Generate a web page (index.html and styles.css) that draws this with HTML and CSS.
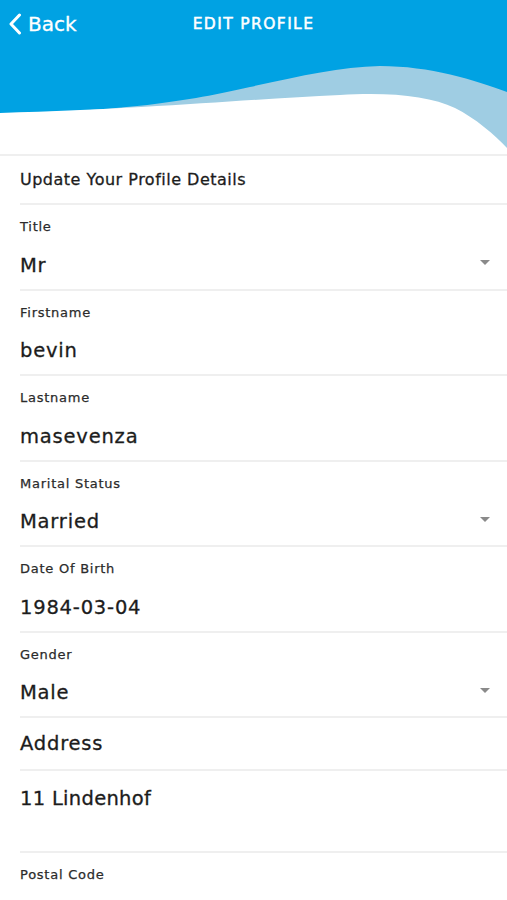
FILE: index.html
```html
<!DOCTYPE html>
<html lang="en">
<head>
  <meta charset="UTF-8" />
  <meta name="viewport" content="width=device-width, initial-scale=1" />
  <title>Edit Profile</title>
  <link rel="stylesheet" href="styles.css">
</head>
<body>
  <header class="top">
    <div class="top-bar">
      <a href="#" class="back">
        <svg class="back-icon" viewBox="0 0 14 22" width="14" height="22">
          <path d="M11.5 2 L3 11 L11.5 20" fill="none" stroke="#fff" stroke-width="3" stroke-linecap="round" stroke-linejoin="round" />
        </svg>
        <span>Back</span>
      </a>
      <h1>EDIT PROFILE</h1>
    </div>
    <!-- wave under the title bar -->
    <svg class="wave" viewBox="0 48 507 106" width="507" height="106" preserveAspectRatio="none">
      <path d="M0,113 C120,112 190,101 250,87 C300,76 340,67 380,66 C430,66 475,80 507,92 L507,155 L0,155 Z" fill="#9fcde3" />
      <path d="M0,113 C150,109 250,99 340,95 C390,92 430,96 455,108 C475,118 495,135 507,148 L507,155 L0,155 Z" fill="#fff" />
    </svg>
  </header>

  <main class="form">
    <div class="form-title">Update Your Profile Details</div>

    <div class="field">
      <label>Title</label>
      <div class="value select">Mr <span class="caret"></span></div>
    </div>

    <div class="field">
      <label>Firstname</label>
      <div class="value">bevin</div>
    </div>

    <div class="field">
      <label>Lastname</label>
      <div class="value">masevenza</div>
    </div>

    <div class="field">
      <label>Marital Status</label>
      <div class="value select">Married <span class="caret"></span></div>
    </div>

    <div class="field">
      <label>Date Of Birth</label>
      <div class="value">1984-03-04</div>
    </div>

    <div class="field">
      <label>Gender</label>
      <div class="value select">Male <span class="caret"></span></div>
    </div>

    <div class="field-plain">Address</div>
    <div class="field-area">11 Lindenhof</div>

    <div class="field last">
      <label>Postal Code</label>
    </div>
  </main>
</body>
</html>
```

FILE: styles.css
```css
body {
  margin: 0;
  padding: 0;
  background: #fff;
  color: #1c1c1c;
  font-family: 'DejaVu Sans', sans-serif;
  width: 507px;
  overflow: hidden;
}

.top {
  background: #00a2e3;
  border-bottom: 2px solid #efefef;
}

.top-bar {
  height: 48px;
  display: flex;
  align-items: center;
  position: relative;
}

.back {
  display: flex;
  align-items: center;
  gap: 6px;
  padding-left: 8px;
  color: #fff;
  text-decoration: none;
  font-size: 20px;
  -webkit-text-stroke: 0.3px #fff;
  z-index: 1;
}

.back-icon {
  display: block;
}

.top-bar h1 {
  position: absolute;
  left: 0;
  right: 0;
  margin: 0;
  text-align: center;
  color: #fff;
  font-size: 15.5px;
  font-weight: 400;
  -webkit-text-stroke: 0.5px #fff;
  letter-spacing: 1.4px;
}

.wave {
  display: block;
}

.form {
  padding-left: 20px;
}

.form-title {
  height: 46px;
  padding-bottom: 1px;
  display: flex;
  align-items: center;
  font-size: 16px;
  letter-spacing: 0.5px;
  -webkit-text-stroke: 0.3px #1c1c1c;
  border-bottom: 2px solid #efefef;
}

.field {
  padding: 14px 0 10px 0;
  border-bottom: 2px solid #efefef;
}

.field label {
  display: block;
  font-size: 13px;
  line-height: 16px;
  letter-spacing: 0.75px;
  color: #2b2b2b;
  -webkit-text-stroke: 0.25px #2b2b2b;
  margin-bottom: 17.5px;
}

.field .value,
.field-plain,
.field-area {
  font-size: 19.5px;
  letter-spacing: 0.8px;
  -webkit-text-stroke: 0.3px #1c1c1c;
}

.field .value {
  line-height: 26px;
  height: 26px;
}

.select {
  display: flex;
  justify-content: space-between;
  align-items: center;
  padding-right: 17px;
}

.caret {
  width: 0;
  height: 0;
  border-left: 5px solid transparent;
  border-right: 5px solid transparent;
  border-top: 5px solid #8a8a8a;
  margin-top: -6px;
}

.field-plain {
  height: 51px;
  display: flex;
  align-items: center;
  border-bottom: 2px solid #efefef;
}

.field-area {
  height: 82px;
  padding-top: 15px;
  box-sizing: border-box;
  line-height: 26px;
  letter-spacing: 0.3px;
  border-bottom: 2px solid #efefef;
}

.field.last {
  border-bottom: none;
}
```
